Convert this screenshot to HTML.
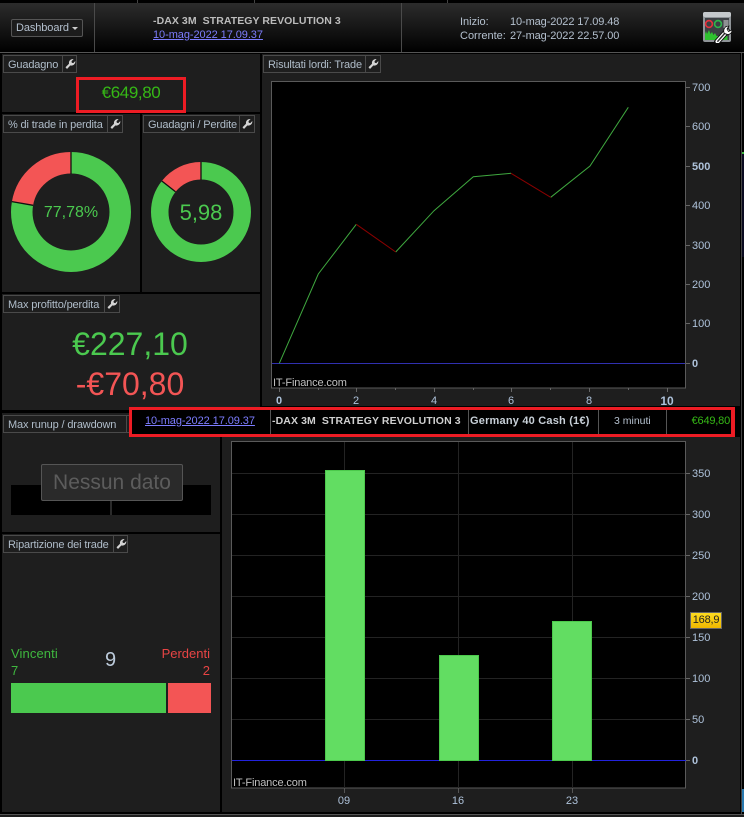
<!DOCTYPE html>
<html><head><meta charset="utf-8"><style>
html,body{margin:0;padding:0;background:#000;width:744px;height:817px;overflow:hidden}
body{position:relative;font-family:"Liberation Sans",Arial,sans-serif}
div,span,a{position:absolute;white-space:pre;box-sizing:border-box}
.p{background:#1e1e1e}
.t{height:18px;border:1px solid #4a4a4a;font-size:11px;line-height:18px;color:#b0bdca;padding-left:4px;letter-spacing:-.15px}
.t i{position:absolute;top:0;bottom:0;width:1px;background:#4a4a4a}
.t svg{position:absolute;top:2px;width:12px;height:12px}
.l{font-size:11px;line-height:14px;color:#b4c0ce}
.lk{color:#7d7dff;text-decoration:underline}
.y{font-size:11px;line-height:14px;color:#aec2da;left:692px}
.x{font-size:11px;line-height:14px;color:#aec2da;text-align:center;width:30px}
svg{position:absolute;left:0;top:0}
</style></head><body>
<!-- header -->
<div style="left:0;top:3px;width:744px;height:49px;background:linear-gradient(#2c2c2c,#000)"></div>
<div style="left:94px;top:3px;width:1px;height:49px;background:#4a4a4a"></div>
<div style="left:401px;top:3px;width:1px;height:49px;background:#4a4a4a"></div>
<div style="left:137px;top:0;width:1px;height:3px;background:#444"></div>
<div style="left:254px;top:0;width:1px;height:3px;background:#444"></div>
<div style="left:447px;top:0;width:1px;height:3px;background:#444"></div>
<div style="left:0;top:52px;width:744px;height:1px;background:#555"></div>
<div style="left:11px;top:19px;width:72px;height:18px;border:1px solid #555;border-radius:2px;background:#1c1c1c"></div>
<div class="l" style="left:16px;top:21px;letter-spacing:-.1px">Dashboard</div>
<div style="left:72px;top:27px;width:0;height:0;border-left:3.5px solid transparent;border-right:3.5px solid transparent;border-top:3.5px solid #ccc"></div>
<div class="l" style="left:153px;top:14px;font-weight:bold;font-size:10.5px;color:#bcbcbc;letter-spacing:.07px">-DAX 3M  STRATEGY REVOLUTION 3</div>
<div class="l lk" style="left:153px;top:28px;letter-spacing:-.07px">10-mag-2022 17.09.37</div>
<div class="l" style="left:460px;top:15px">Inizio:</div>
<div class="l" style="left:510px;top:15px;letter-spacing:-.1px">10-mag-2022 17.09.48</div>
<div class="l" style="left:460px;top:29px">Corrente:</div>
<div class="l" style="left:510px;top:29px;letter-spacing:-.1px">27-mag-2022 22.57.00</div>
<!-- icon -->
<svg style="left:702px;top:11px" width="32" height="32" viewBox="0 0 32 32">
<rect x="1" y="1" width="28" height="30" rx="2" fill="#8f9498"/>
<rect x="1" y="1" width="28" height="5" rx="2" fill="#c4c8cb"/>
<rect x="3" y="7" width="24" height="22" fill="#3c4044"/>
<circle cx="7" cy="13" r="3.400" fill="none" stroke="#e8323c" stroke-width="1.600"/>
<circle cx="16" cy="13" r="3.400" fill="none" stroke="#2db84a" stroke-width="1.600"/>
<path d="M21.500 10h5M21.500 12h5M21.500 14h5M21.500 16h5" stroke="#e0e0e0" stroke-width="1"/>
<path d="M3 29v-6l1-3 1 3 2-4 1.500 4 1.500-2 1.500 3 1.500-2 1.500 3h11v4z" fill="#2fc12f"/>
<path d="M15 31 25 20" stroke="#111" stroke-width="6" stroke-linecap="round"/>
<path d="M15.500 30.500 25 20" stroke="#fff" stroke-width="4" stroke-linecap="round"/>
<path d="M15.800 30.200 24 21" stroke="#333" stroke-width="1.500" stroke-linecap="round"/>
<path d="M22 22c-1-4 1-7 5-7l-2 3 1.500 2.500L30 19c0 4-4 6-8 3z" fill="#fff" stroke="#111" stroke-width=".8"/>
</svg>

<!-- panels -->
<div class="p" style="left:2px;top:54px;width:258px;height:58px"></div>
<div class="p" style="left:2px;top:114px;width:138px;height:178px"></div>
<div class="p" style="left:142px;top:114px;width:118px;height:178px"></div>
<div class="p" style="left:2px;top:294px;width:258px;height:116px"></div>
<div class="p" style="left:2px;top:413px;width:218px;height:119px"></div>
<div class="p" style="left:2px;top:534px;width:218px;height:278px"></div>
<div class="p" style="left:262px;top:54px;width:478px;height:352px"></div>
<div class="p" style="left:222px;top:437px;width:518px;height:375px"></div>
<div class="p" style="left:2px;top:410px;width:127px;height:3px;background:#000"></div>
<div style="left:0;top:814px;width:744px;height:1px;background:#555"></div>
<div class="p" style="left:0;top:815px;width:744px;height:2px"></div>
<div style="left:741px;top:53px;width:1px;height:761px;background:#444"></div>
<div style="left:742px;top:152px;width:2px;height:2px;background:#3cb83c"></div>
<div style="left:742px;top:154px;width:2px;height:103px;background:#0a0a20"></div>
<div style="left:742px;top:789px;width:2px;height:23px;background:#2a7ab0"></div>

<!-- tabs -->
<svg width="0" height="0" style="position:absolute"><defs><path id="w" d="M1.500 9.300 5 5.800C4.500 3 6.500 .8 9.600 1L7.500 3.200l.3 1.500 1.500.4L11.300 3c.3 3-2 5-5 4.500L3 11z" fill="#d4d4d4"/></defs></svg>
<div class="t" style="left:3px;top:55px;width:74px">Guadagno<i style="left:58px"></i><svg style="left:60px" viewBox="0 0 12 12"><use href="#w"/></svg></div>
<div class="t" style="left:3px;top:115px;width:120px">% di trade in perdita<i style="left:103px"></i><svg style="left:105px" viewBox="0 0 12 12"><use href="#w"/></svg></div>
<div class="t" style="left:143px;top:115px;width:112px">Guadagni / Perdite<i style="left:95px"></i><svg style="left:97px" viewBox="0 0 12 12"><use href="#w"/></svg></div>
<div class="t" style="left:3px;top:295px;width:117px">Max profitto/perdita<i style="left:100px"></i><svg style="left:102px" viewBox="0 0 12 12"><use href="#w"/></svg></div>
<div class="t" style="left:263px;top:55px;width:118px">Risultati lordi: Trade<i style="left:101px"></i><svg style="left:103px" viewBox="0 0 12 12"><use href="#w"/></svg></div>
<div class="t" style="left:3px;top:415px;width:127px">Max runup / drawdown<i style="left:122px"></i></div>
<div class="t" style="left:3px;top:535px;width:125px">Ripartizione dei trade<i style="left:109px"></i><svg style="left:111px" viewBox="0 0 12 12"><use href="#w"/></svg></div>

<!-- guadagno -->
<div style="left:76px;top:77px;width:110px;height:36px;border:3px solid #ed1c24"></div>
<div style="left:76px;top:82px;width:110px;text-align:center;font-size:17px;line-height:22px;letter-spacing:-.4px;color:#36b816">€649,80</div>

<!-- donuts & charts -->
<svg width="744" height="817" viewBox="0 0 744 817">
<g fill="none" stroke-width="21.5" transform="rotate(-90 71 212)">
<circle cx="71" cy="212" r="49.25" stroke="#4bc94f" pathLength="360" stroke-dasharray="280 360"/>
<circle cx="71" cy="212" r="49.25" stroke="#f35555" pathLength="360" stroke-dasharray="80 360" stroke-dashoffset="-280"/>
</g>
<path d="M71 152V174M11.900 201.600L33.100 205.300" stroke="#111" stroke-width="1.300"/>
<g fill="none" stroke-width="17.500" transform="rotate(-90 201 212)">
<circle cx="201" cy="212" r="41.250" stroke="#4bc94f" pathLength="360" stroke-dasharray="308.400 360"/>
<circle cx="201" cy="212" r="41.250" stroke="#f35555" pathLength="360" stroke-dasharray="51.600 360" stroke-dashoffset="-308.400"/>
</g>
<path d="M201 162V180M161.800 181L175.500 191.800" stroke="#111" stroke-width="1.300"/>

<!-- chart 1 -->
<rect x="271.500" y="81.500" width="414" height="306.500" fill="#000" stroke="#5a5a5a"/>
<path d="M272 363.500H685" stroke="#3030b0"/>
<path d="M279.300 363.300 318.300 274 356.300 224.300M395.700 252 434 210.700 473.300 176.700 511 173.300M550.700 197.300 590 166 628.300 107.300" fill="none" stroke="#3fa83f" stroke-width="1"/>
<path d="M356.300 224.300 395.700 252M511 173.300 550.700 197.300" fill="none" stroke="#8b0000" stroke-width="1"/>
<path d="M686 87.500h4M686 126.500h4M686 166.500h4M686 205.500h4M686 245.500h4M686 284.500h4M686 323.500h4M686 363.500h4" stroke="#666"/>
<path d="M279.500 388v4M318.500 388v2M356.500 388v4M395.500 388v2M434.500 388v4M473.500 388v2M511.500 388v4M550.500 388v2M589.500 388v4M628.500 388v2M667.500 388v4" stroke="#666"/>

<!-- chart 2 -->
<rect x="231.500" y="441.500" width="454" height="346.500" fill="#000" stroke="#5a5a5a"/>
<path d="M232 473.500H685M232 514.500H685M232 555.500H685M232 596.500H685M232 637.500H685M232 678.500H685M232 719.500H685M344.500 442V788M458.500 442V788M572.500 442V788" stroke="#232323"/>
<path d="M344.500 788V793M458.500 788V793M572.500 788V793" stroke="#555"/>
<path d="M232 760.500H686" stroke="#2222dd"/>
<g fill="#62dd62" stroke="#4cc94c">
<rect x="325.500" y="470.500" width="39" height="290"/>
<rect x="439.500" y="655.500" width="39" height="105"/>
<rect x="552.500" y="621.500" width="39" height="139"/>
</g>
<path d="M686 473.500h4M686 514.500h4M686 555.500h4M686 596.500h4M686 637.500h4M686 678.500h4M686 719.500h4M686 760.500h4" stroke="#666"/>
</svg>

<div style="left:11px;top:202px;width:120px;text-align:center;font-size:16px;line-height:22px;color:#4bc94f">77,78%</div>
<div style="left:151px;top:200px;width:100px;text-align:center;font-size:22px;line-height:26px;color:#4bc94f">5,98</div>

<div style="left:1px;top:324px;width:258px;text-align:center;font-size:32px;line-height:40px;color:#4bc94f">€227,10</div>
<div style="left:1px;top:364px;width:258px;text-align:center;font-size:32px;line-height:40px;color:#f35555">-€70,80</div>

<!-- y labels -->
<div class="y" style="top:81px">700</div>
<div class="y" style="top:120px">600</div>
<div class="y" style="top:160px;font-weight:bold">500</div>
<div class="y" style="top:199px">400</div>
<div class="y" style="top:239px">300</div>
<div class="y" style="top:278px">200</div>
<div class="y" style="top:317px">100</div>
<div class="y" style="top:357px;font-weight:bold">0</div>
<div class="x" style="left:264px;top:394px;font-weight:bold">0</div>
<div class="x" style="left:341px;top:394px">2</div>
<div class="x" style="left:419px;top:394px">4</div>
<div class="x" style="left:496px;top:394px">6</div>
<div class="x" style="left:574px;top:394px">8</div>
<div class="x" style="left:652px;top:394px;font-weight:bold;font-size:12px">10</div>
<div class="l" style="left:273px;top:376px;color:#c0c0c0;letter-spacing:-.15px">IT-Finance.com</div>

<div class="y" style="top:467px">350</div>
<div class="y" style="top:508px">300</div>
<div class="y" style="top:549px">250</div>
<div class="y" style="top:590px">200</div>
<div class="y" style="top:631px">150</div>
<div class="y" style="top:672px">100</div>
<div class="y" style="top:713px">50</div>
<div class="y" style="top:754px;font-weight:bold">0</div>
<div class="x" style="left:329px;top:794px">09</div>
<div class="x" style="left:443px;top:794px">16</div>
<div class="x" style="left:557px;top:794px">23</div>
<div class="l" style="left:233px;top:776px;color:#c0c0c0;letter-spacing:-.15px">IT-Finance.com</div>
<div style="left:690px;top:612px;width:32px;height:17px;border:1px solid #666;background:linear-gradient(#ffdc20,#f0b800);font-size:11px;line-height:15px;color:#222;text-align:center;letter-spacing:-.2px">168,9</div>

<!-- table -->
<div style="left:129px;top:407px;width:606px;height:30px;border:3px solid #ed1c24;border-right-width:4px;background:#000"></div>
<div style="left:270px;top:410px;width:1px;height:24px;background:#555"></div>
<div style="left:468px;top:410px;width:1px;height:24px;background:#555"></div>
<div style="left:598px;top:410px;width:1px;height:24px;background:#555"></div>
<div style="left:666px;top:410px;width:1px;height:24px;background:#555"></div>
<div class="l lk" style="left:145px;top:414px;letter-spacing:-.07px">10-mag-2022 17.09.37</div>
<div class="l" style="left:272px;top:414px;font-weight:bold;font-size:10.5px;color:#d0d0d0;letter-spacing:.1px">-DAX 3M  STRATEGY REVOLUTION 3</div>
<div class="l" style="left:470px;top:414px;font-weight:bold;color:#c8d0d8;letter-spacing:.2px">Germany 40 Cash (1€)</div>
<div class="l" style="left:614px;top:414px;font-size:10.5px">3 minuti</div>
<div class="l" style="left:667px;top:414px;width:63px;text-align:right;color:#36b816;letter-spacing:-.2px">€649,80</div>

<!-- nessun dato -->
<div style="left:11px;top:485px;width:200px;height:30px;background:#000"></div>
<div style="left:110px;top:485px;width:2px;height:30px;background:#2a2a2a"></div>
<div style="left:41px;top:464px;width:142px;height:37px;border:1px solid #555;border-radius:2px;background:#2a2a2a;text-align:center;font-size:21px;line-height:35px;color:#5c5c5c">Nessun dato</div>

<!-- ripartizione -->
<div style="left:11px;top:646px;font-size:13px;line-height:16px;color:#3fb83f;letter-spacing:.1px">Vincenti</div>
<div style="left:11px;top:663px;font-size:13px;line-height:16px;color:#3fb83f">7</div>
<div style="left:105px;top:649px;font-size:20px;line-height:22px;color:#bccbdb">9</div>
<div style="right:534px;top:646px;font-size:13px;line-height:16px;color:#e84444">Perdenti</div>
<div style="right:534px;top:663px;font-size:13px;line-height:16px;color:#e84444">2</div>
<div style="left:11px;top:683px;width:155px;height:30px;background:#4bc94f"></div>
<div style="left:168px;top:683px;width:43px;height:30px;background:#f35555"></div>
</body></html>
